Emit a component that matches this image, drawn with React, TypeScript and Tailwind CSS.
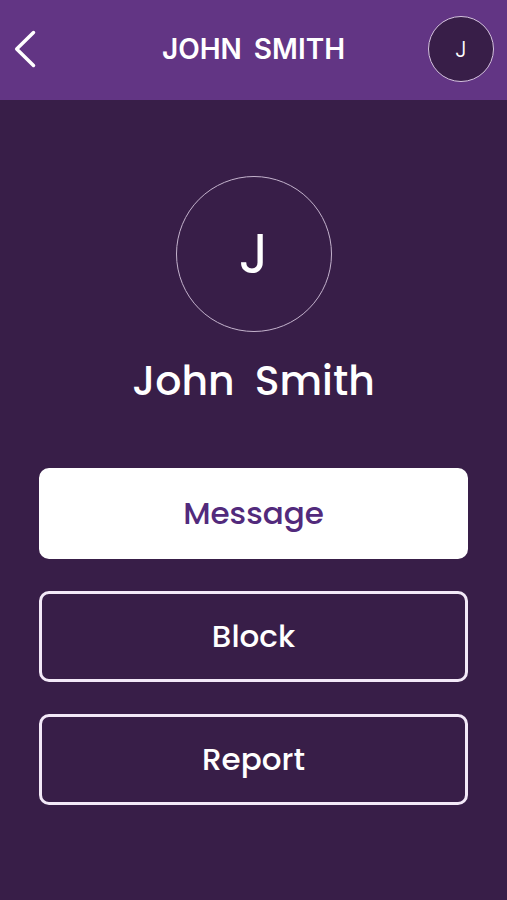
import { ReactNode } from 'react';

type Variant = 'solid' | 'outline';

const variants: Record<Variant, string> = {
    solid: 'border-white bg-white text-[#522a7c]',
    outline: 'border-[#f3e9f8] bg-transparent text-white',
};

const ActionButton = ({ variant = 'outline', children }: { variant?: Variant; children: ReactNode }) => (
    <button
        type="button"
        className={`flex h-[91px] w-full items-center justify-center rounded-[10px] border-[3px] text-[31px] font-medium ${variants[variant]}`}
    >
        {children}
    </button>
);

const user = { first: 'John', last: 'Smith' };

const App = () => {
    const initial = user.first[0];

    return (
        <div className="flex min-h-screen flex-col bg-[#381e48] font-['Poppins','Inter',sans-serif] text-white">
            <header className="flex h-[100px] items-center justify-between bg-[#623584] px-[13px] pb-[2px]">
                <button type="button" aria-label="Back" className="flex w-[66px] items-center">
                    <svg width="24" height="40" viewBox="0 0 24 40" fill="none" stroke="currentColor" strokeWidth="3.5" strokeLinecap="round" strokeLinejoin="round">
                        <path d="M20.5 3.5 3.7 20l16.8 16.5" />
                    </svg>
                </button>
                <h1 className="flex gap-3 font-['Inter',sans-serif] text-[28px] font-semibold">
                    <span>{user.first.toUpperCase()}</span>
                    <span>{user.last.toUpperCase()}</span>
                </h1>
                <button type="button" aria-label="Profile" className="flex size-[66px] items-center justify-center rounded-full border border-[#d5c3df] bg-[#381e48] text-[23px] font-light">
                    {initial}
                </button>
            </header>

            <main className="flex flex-col items-center px-[39px] pt-[76px] pb-10">
                <div className="flex size-[156px] items-center justify-center rounded-full border border-[#c4b3cd] text-[56px]">
                    {initial}
                </div>
                <h2 className="mt-[17px] flex gap-5 text-[41px] leading-[64px] font-medium">
                    <span>{user.first}</span>
                    <span>{user.last}</span>
                </h2>
                <div className="mt-[55px] flex w-full flex-col gap-8">
                    <ActionButton variant="solid">Message</ActionButton>
                    <ActionButton>Block</ActionButton>
                    <ActionButton>Report</ActionButton>
                </div>
            </main>
        </div>
    );
};

export default App;
